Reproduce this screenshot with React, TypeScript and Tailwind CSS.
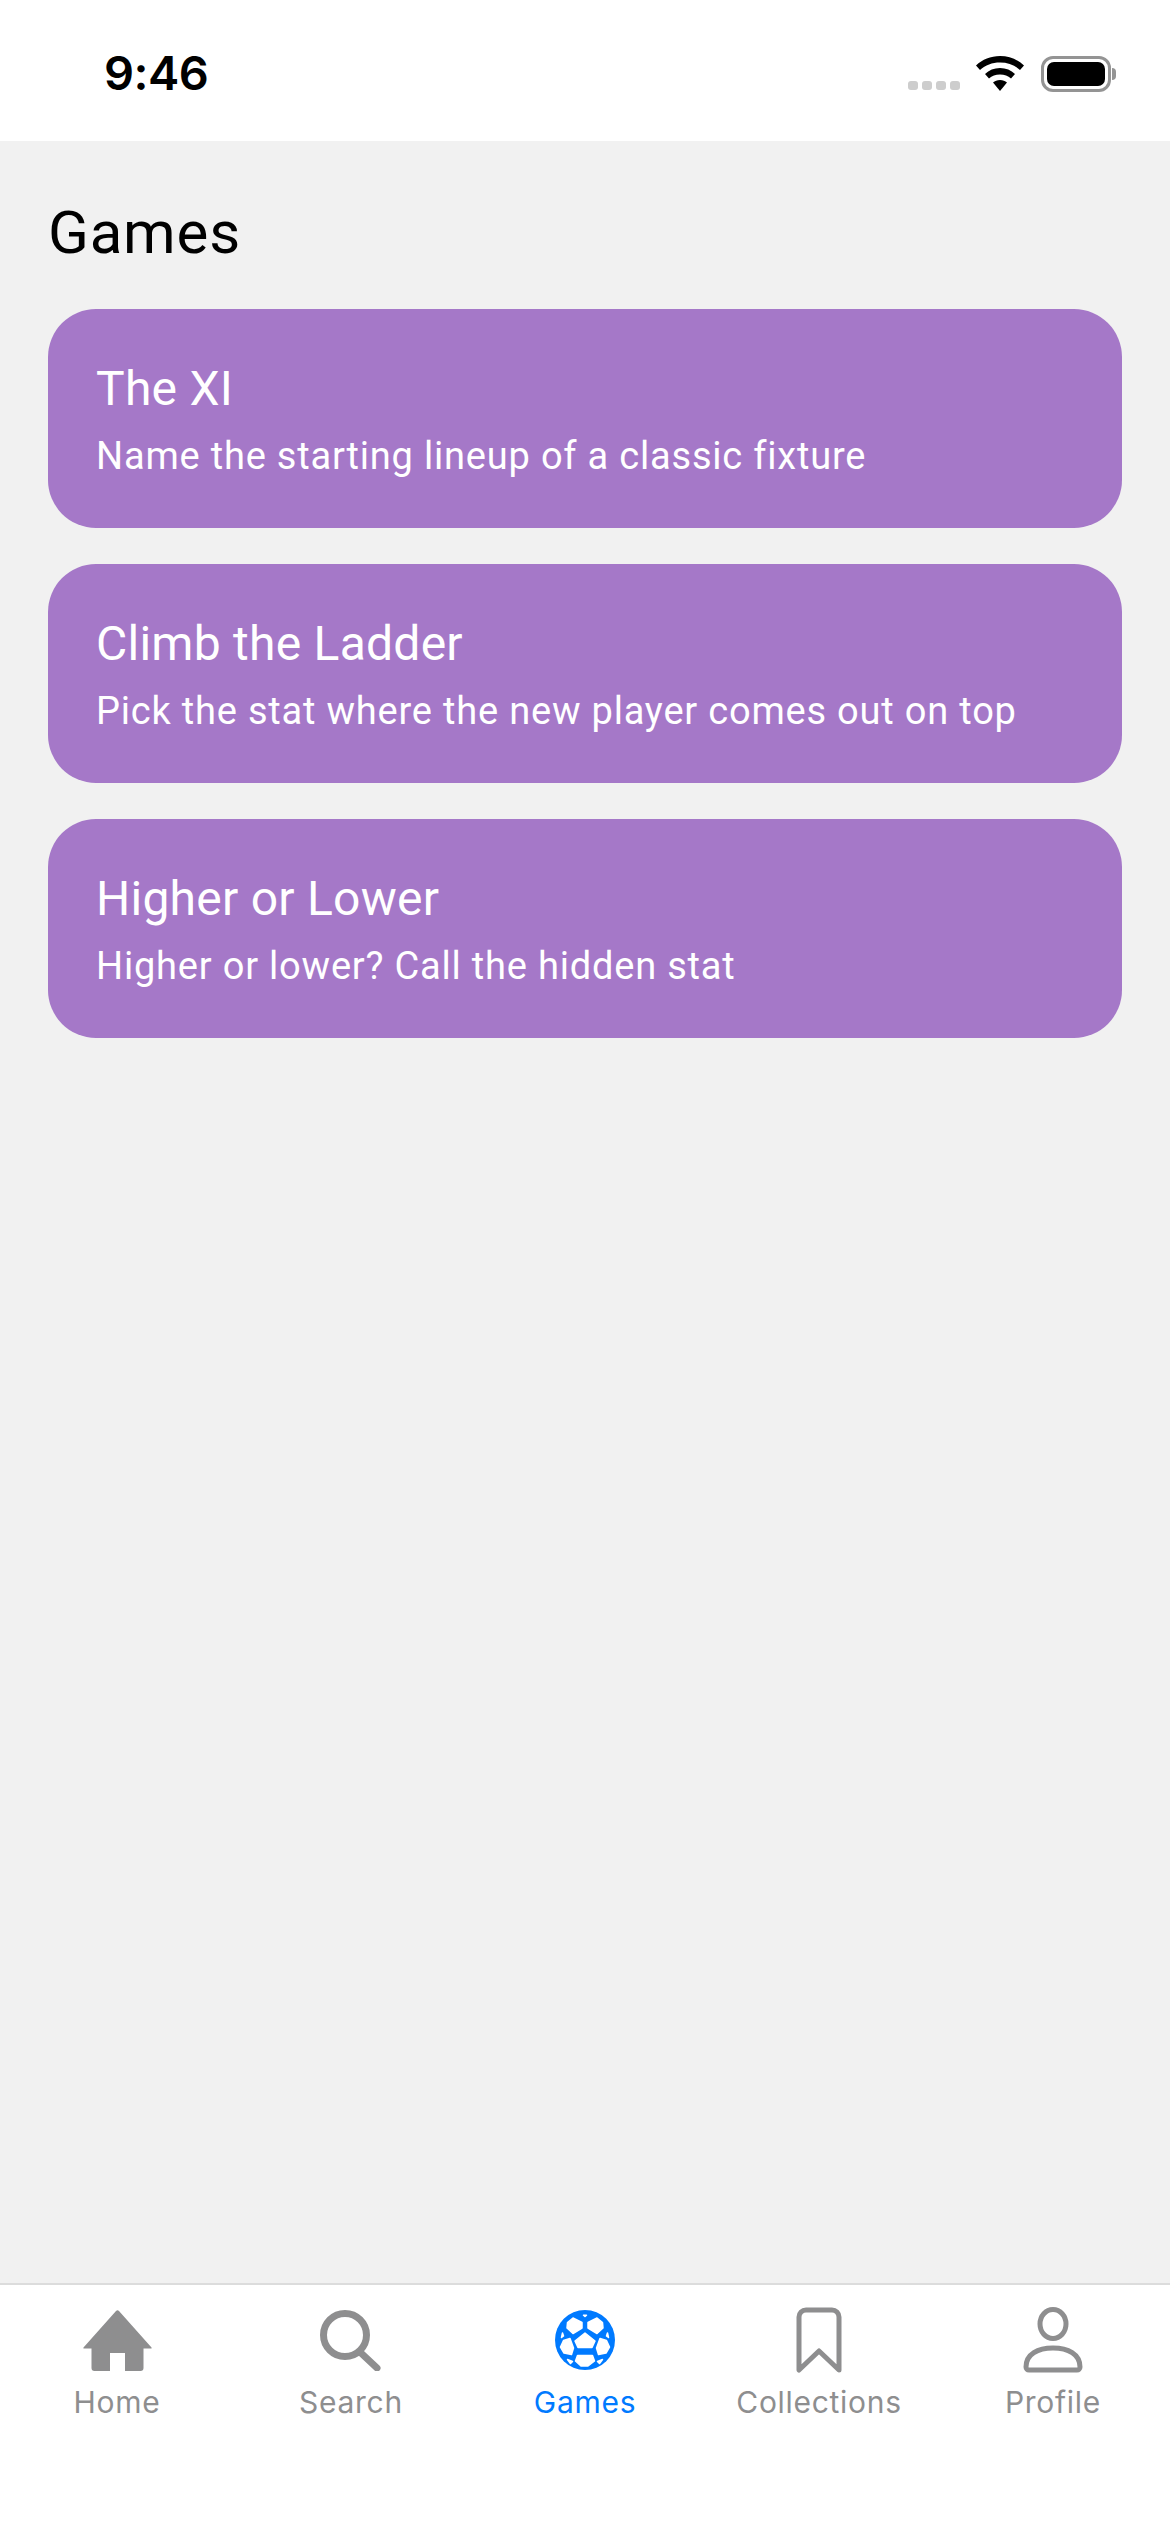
const Tab = ({ label, active, children }: { label: string; active?: boolean; children: React.ReactNode }) => (
  <div className="flex flex-1 flex-col items-center">
    <div className="flex h-[66px] items-center justify-center">{children}</div>
    <span className={`mt-[11px] text-[30px] leading-[36px] tracking-[0.7px] font-['Inter',sans-serif] ${active ? "text-[#007aff]" : "text-[#8e8e8f]"}`}>{label}</span>
  </div>
);

const games = [
  { title: "The XI", text: "Name the starting lineup of a classic fixture" },
  { title: "Climb the Ladder", text: "Pick the stat where the new player comes out on top" },
  { title: "Higher or Lower", text: "Higher or lower? Call the hidden stat" },
];

export default function App() {
  return (
    <div className="flex h-[2532px] w-[1170px] flex-col bg-[#f1f1f1]">
      <div className="flex h-[141px] items-center justify-between bg-white pt-[6px] pl-[104px] pr-[54px]">
        <span className="text-[47px] tracking-[-0.5px] font-semibold font-['Inter',sans-serif] text-black">9:46</span>
        <div className="flex items-center">
          <div className="mt-[24px] mr-[15px] flex gap-[4px]">
            {[0, 1, 2, 3].map((i) => (
              <div key={i} className="h-[9px] w-[10px] rounded-[3px] bg-[#cdcdcd]" />
            ))}
          </div>
          <svg width="50" height="36" viewBox="0 0 50 36">
            <path d="M25 0C15.500 0 7.500 3.500 1 9.500L5 14C10.500 9 17 6.500 25 6.500S39.500 9 45 14L49 9.500C42.500 3.500 34.500 0 25 0Z" fill="#000" />
            <path d="M25 12C19 12 14 14 10 18L14 22.500C17 19.800 20.500 18.500 25 18.500S33 19.800 36 22.500L40 18C36 14 31 12 25 12Z" fill="#000" />
            <path d="M25 24C22 24 20 25 18 26.500L25 35L32 26.500C30 25 28 24 25 24Z" fill="#000" />
          </svg>
          <div className="ml-[16px] flex items-center">
            <div className="flex h-[36px] w-[70px] items-center justify-center rounded-[12px] border-[3px] border-[#949494] bg-white">
              <div className="h-[24px] w-[58px] rounded-[7px] bg-black" />
            </div>
            <div className="ml-[1px] h-[12px] w-[4px] rounded-r-[4px] bg-[#949494]" />
          </div>
        </div>
      </div>

      <main className="flex flex-1 flex-col px-[48px] pt-[57px] font-['Roboto',sans-serif]">
        <h1 className="text-[60px] leading-[70px] tracking-[0.8px] text-black">Games</h1>
        <div className="mt-[41px] flex flex-col gap-[36px]">
          {games.map((game) => (
            <div key={game.title} className="flex h-[219px] flex-col justify-center rounded-[48px] bg-[#a578c8] pt-[2px] pl-[48px] text-white">
              <div className="text-[48px] leading-[62px] tracking-[0.25px]">{game.title}</div>
              <div className="mt-[11px] text-[38px] leading-[50px] tracking-[0.8px]">{game.text}</div>
            </div>
          ))}
        </div>
      </main>

      <nav className="flex h-[249px] border-t-[2px] border-[#dcdcdc] bg-white pt-[22px]">
        <Tab label="Home">
          <svg width="69" height="61" viewBox="0 0 69 61" fill="#8e8e8f">
            <path d="M33 1a2 2 0 0 1 3 0L68.500 37.500a.6.6 0 0 1-.5 1H60.500V58a3 3 0 0 1-3 3H42V43H27V61H11.500a3 3 0 0 1-3-3V38.500H1a.6.6 0 0 1-.5-1Z" />
          </svg>
        </Tab>
        <Tab label="Search">
          <svg width="62" height="62" viewBox="0 0 62 62" fill="none" stroke="#8e8e8f" strokeWidth="7" strokeLinecap="round">
            <circle cx="25" cy="26" r="21.500" />
            <path d="M41 44L57 59" />
          </svg>
        </Tab>
        <Tab label="Games" active>
          <svg width="60" height="60" viewBox="0 0 60 60">
            <circle cx="30" cy="30" r="30" fill="#007aff" />
            <g fill="#fff" stroke="#fff" strokeWidth="1.500" strokeLinejoin="round">
              <path d="M30 23L40 31L37 37.500H23L20 31Z" />
              <path d="M18 8L27 12.500V18L18 23.500L12 18L12.500 12.500Z" />
              <path d="M42 8L33 12.500V18L42 23.500L48 18L47.500 12.500Z" />
              <path d="M8.500 30.500L15 28.500L18.500 38L16.500 44.500L9 43L5.500 37Z" />
              <path d="M51.500 30.500L45 28.500L41.500 38L43.500 44.500L51 43L54.500 37Z" />
              <path d="M22.500 45.500H37.500L39.500 51L33 56H26L20.500 51Z" />
              <path d="M28.500 5.200H31.500L30 6.500Z" />
              <path d="M7.500 23L8.500 26L6.500 27.500Z" />
              <path d="M52.500 23L51.500 26L53.500 27.500Z" />
              <path d="M12.500 49.500L17.500 51.500L15.500 53.500Z" />
              <path d="M47.500 49.500L42.500 51.500L44.500 53.500Z" />
            </g>
          </svg>
        </Tab>
        <Tab label="Collections">
          <svg width="46" height="66" viewBox="0 0 46 66" fill="none" stroke="#8e8e8f" strokeWidth="5" strokeLinejoin="round">
            <path d="M3 63V10a7 7 0 0 1 7-7h26a7 7 0 0 1 7 7v53L23 44Z" />
          </svg>
        </Tab>
        <Tab label="Profile">
          <svg width="60" height="66" viewBox="0 0 60 66" fill="none" stroke="#8e8e8f" strokeWidth="5" strokeLinejoin="round">
            <ellipse cx="30" cy="17" rx="13" ry="14.500" />
            <path d="M3 60C3 47 15 41 30 41S57 47 57 60a3 3 0 0 1-3 3H6a3 3 0 0 1-3-3Z" />
          </svg>
        </Tab>
      </nav>
    </div>
  );
}
